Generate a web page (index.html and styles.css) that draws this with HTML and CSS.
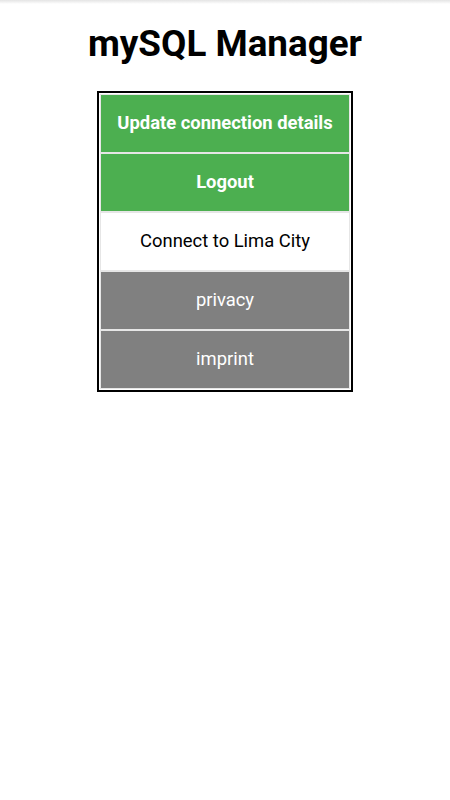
FILE: index.html
```html
<!DOCTYPE html>
<html>
<head>
<meta charset="utf-8">
<link rel="stylesheet" href="styles.css">
</head>
<body>
<div class="topshade"></div>
<h1 class="title">mySQL Manager</h1>
<div class="menu">
  <div class="item green bold">Update connection details</div>
  <div class="item green bold">Logout</div>
  <div class="item plain">Connect to Lima City</div>
  <div class="item gray">privacy</div>
  <div class="item gray">imprint</div>
</div>
</body>
</html>
```
FILE: styles.css
```css
html, body {
  margin: 0;
  padding: 0;
  background: #fff;
  font-family: Roboto, "Liberation Sans", sans-serif;
}
body {
  display: flex;
  flex-direction: column;
  align-items: center;
  width: 450px;
  min-height: 800px;
  position: relative;
}
.topshade {
  position: absolute;
  top: 0;
  left: 0;
  right: 0;
  height: 4px;
  background: linear-gradient(#e4e4e4, #ffffff);
}
.title {
  margin: 20px 0 0 0;
  font-size: 36.8px;
  line-height: 48px;
  font-weight: 700;
  color: #000;
  text-align: center;
}
.menu {
  margin-top: 23px;
  width: 250px;
  border: 2px solid #000;
  padding: 1px;
  display: flex;
  flex-direction: column;
}
.item {
  height: 57px;
  border: 1px solid #e6e6e6;
  display: flex;
  align-items: center;
  justify-content: center;
  font-size: 18.4px;
  padding-bottom: 2px;
  box-sizing: content-box;
}
.item {
  height: 55px;
}
.green {
  background: #4caf50;
  color: #fff;
}
.bold {
  font-weight: 700;
}
.plain {
  background: #fff;
  color: #000;
}
.gray {
  background: #808080;
  color: #fff;
}
```
